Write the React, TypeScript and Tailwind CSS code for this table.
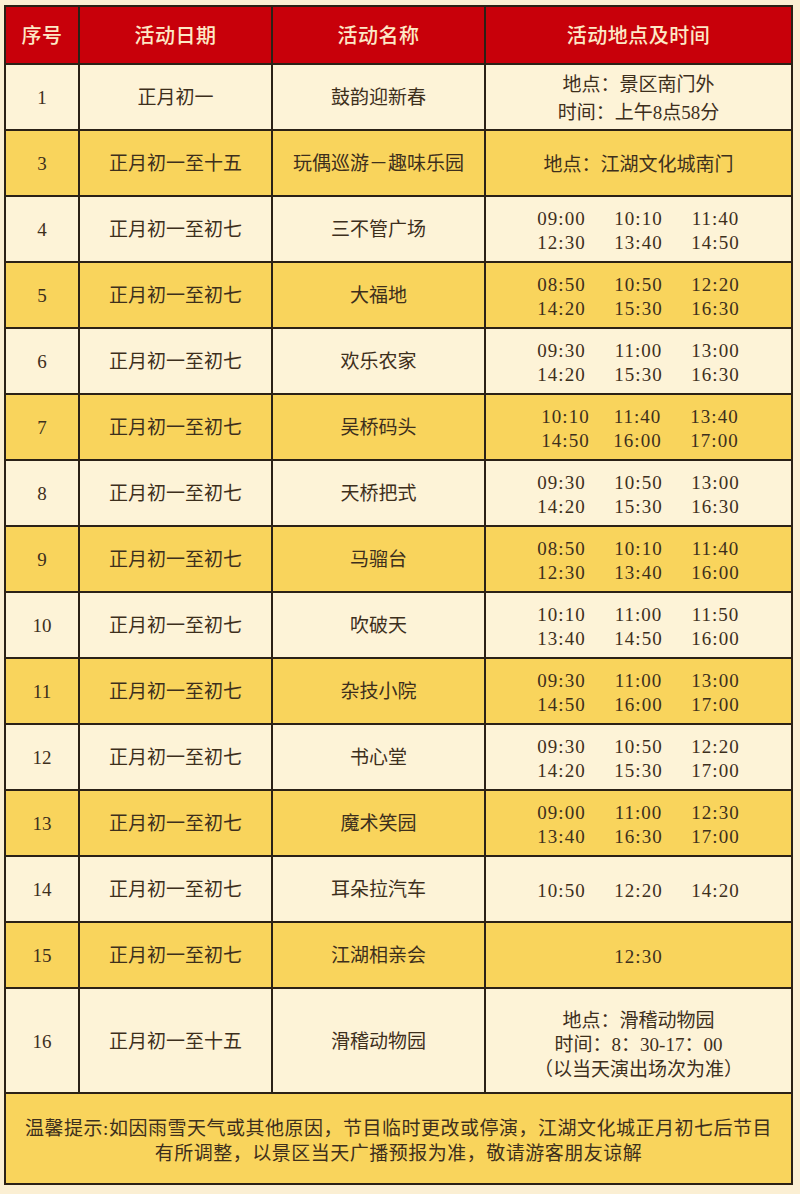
import React from 'react';

type Row = {
  no: string;
  date: string;
  name: string;
  place?: string[];
  times?: string[][];
  tone: 'cream' | 'gold';
  tight?: boolean;
};

const rows: Row[] = [
  { no: '1', date: '正月初一', name: '鼓韵迎新春', place: ['地点：景区南门外', '时间：上午8点58分'], tone: 'cream' },
  { no: '3', date: '正月初一至十五', name: '玩偶巡游－趣味乐园', place: ['地点：江湖文化城南门'], tone: 'gold' },
  { no: '4', date: '正月初一至初七', name: '三不管广场', times: [['09:00', '10:10', '11:40'], ['12:30', '13:40', '14:50']], tone: 'cream' },
  { no: '5', date: '正月初一至初七', name: '大福地', times: [['08:50', '10:50', '12:20'], ['14:20', '15:30', '16:30']], tone: 'gold' },
  { no: '6', date: '正月初一至初七', name: '欢乐农家', times: [['09:30', '11:00', '13:00'], ['14:20', '15:30', '16:30']], tone: 'cream' },
  { no: '7', date: '正月初一至初七', name: '吴桥码头', times: [['10:10', '11:40', '13:40'], ['14:50', '16:00', '17:00']], tone: 'gold', tight: true },
  { no: '8', date: '正月初一至初七', name: '天桥把式', times: [['09:30', '10:50', '13:00'], ['14:20', '15:30', '16:30']], tone: 'cream' },
  { no: '9', date: '正月初一至初七', name: '马骝台', times: [['08:50', '10:10', '11:40'], ['12:30', '13:40', '16:00']], tone: 'gold' },
  { no: '10', date: '正月初一至初七', name: '吹破天', times: [['10:10', '11:00', '11:50'], ['13:40', '14:50', '16:00']], tone: 'cream' },
  { no: '11', date: '正月初一至初七', name: '杂技小院', times: [['09:30', '11:00', '13:00'], ['14:50', '16:00', '17:00']], tone: 'gold' },
  { no: '12', date: '正月初一至初七', name: '书心堂', times: [['09:30', '10:50', '12:20'], ['14:20', '15:30', '17:00']], tone: 'cream' },
  { no: '13', date: '正月初一至初七', name: '魔术笑园', times: [['09:00', '11:00', '12:30'], ['13:40', '16:30', '17:00']], tone: 'gold' },
  { no: '14', date: '正月初一至初七', name: '耳朵拉汽车', times: [['10:50', '12:20', '14:20']], tone: 'cream' },
  { no: '15', date: '正月初一至初七', name: '江湖相亲会', times: [['', '12:30', '']], tone: 'gold' },
];

const FONT = { fontFamily: '"Liberation Serif", "Noto Sans CJK SC", serif' };

const Cell: React.FC<{ bg: string; children?: React.ReactNode; className?: string }> = ({ bg, children, className }) => (
  <div className={`${bg} flex flex-col items-center justify-center text-center ${className ?? ''}`}>{children}</div>
);

const App: React.FC = () => {
  return (
    <div className="w-[800px] h-[1194px] bg-[#fbefd3] pt-[5px] pl-[4px] text-[#3d2f1c]" style={FONT}>
      <div className="w-[789px] grid grid-cols-[72px_191px_211px_305px] gap-[2px] bg-[#2b2116] p-[2px]">
        {/* header */}
        {['序号', '活动日期', '活动名称', '活动地点及时间'].map(h => (
          <div
            key={h}
            className="h-[56px] bg-[#c8000a] flex items-center justify-center text-[20px] font-medium text-[#fde8c6] tracking-[0.5px]"
            style={{ fontFamily: '"Noto Sans CJK SC", sans-serif' }}
          >
            {h}
          </div>
        ))}

        {rows.map(r => {
          const bg = r.tone === 'cream' ? 'bg-[#fdf3d7]' : 'bg-[#f9d45c]';
          return (
            <React.Fragment key={r.no}>
              <Cell bg={bg} className="h-[64px] text-[19px] pt-[3px]">{r.no}</Cell>
              <Cell bg={bg} className="h-[64px] text-[19px] pt-[3px]">{r.date}</Cell>
              <Cell bg={bg} className="h-[64px] text-[19px] pt-[3px]">{r.name}</Cell>
              <Cell bg={bg} className="h-[64px] text-[19px] leading-[25px]">
                {r.place && r.place.map(p => <div key={p} className="pt-[3px]">{p}</div>)}
                {r.times && (
                  <div
                    className={`grid pt-[4px] leading-[24px] text-[19px] tracking-[1px] ${
                      r.tight ? 'grid-cols-[67px_77px_77px] pl-[8px]' : 'grid-cols-[77px_77px_77px]'
                    }`}
                  >
                    {r.times.flat().map((t, i) => (
                      <span key={i} className="text-center">{t}</span>
                    ))}
                  </div>
                )}
              </Cell>
            </React.Fragment>
          );
        })}

        {/* last row */}
        <Cell bg="bg-[#fdf3d7]" className="h-[103px] text-[19px] pt-[4px]">16</Cell>
        <Cell bg="bg-[#fdf3d7]" className="h-[103px] text-[19px] pt-[4px]">正月初一至十五</Cell>
        <Cell bg="bg-[#fdf3d7]" className="h-[103px] text-[19px] pt-[4px]">滑稽动物园</Cell>
        <Cell bg="bg-[#fdf3d7]" className="h-[103px] text-[19px] leading-[24.5px] pt-[10px]">
          <div>地点：滑稽动物园</div>
          <div>时间：8：30-17：00</div>
          <div>（以当天演出场次为准）</div>
        </Cell>

        {/* footer */}
        <div className="col-span-4 h-[89px] bg-[#f9d45c] flex items-center justify-center text-center">
          <p className="text-[19px] leading-[25px] tracking-[0.5px] pt-[4px]">
            温馨提示:如因雨雪天气或其他原因，节目临时更改或停演，江湖文化城正月初七后节目
            <br />
            有所调整，以景区当天广播预报为准，敬请游客朋友谅解
          </p>
        </div>
      </div>
    </div>
  );
};

export default App;
